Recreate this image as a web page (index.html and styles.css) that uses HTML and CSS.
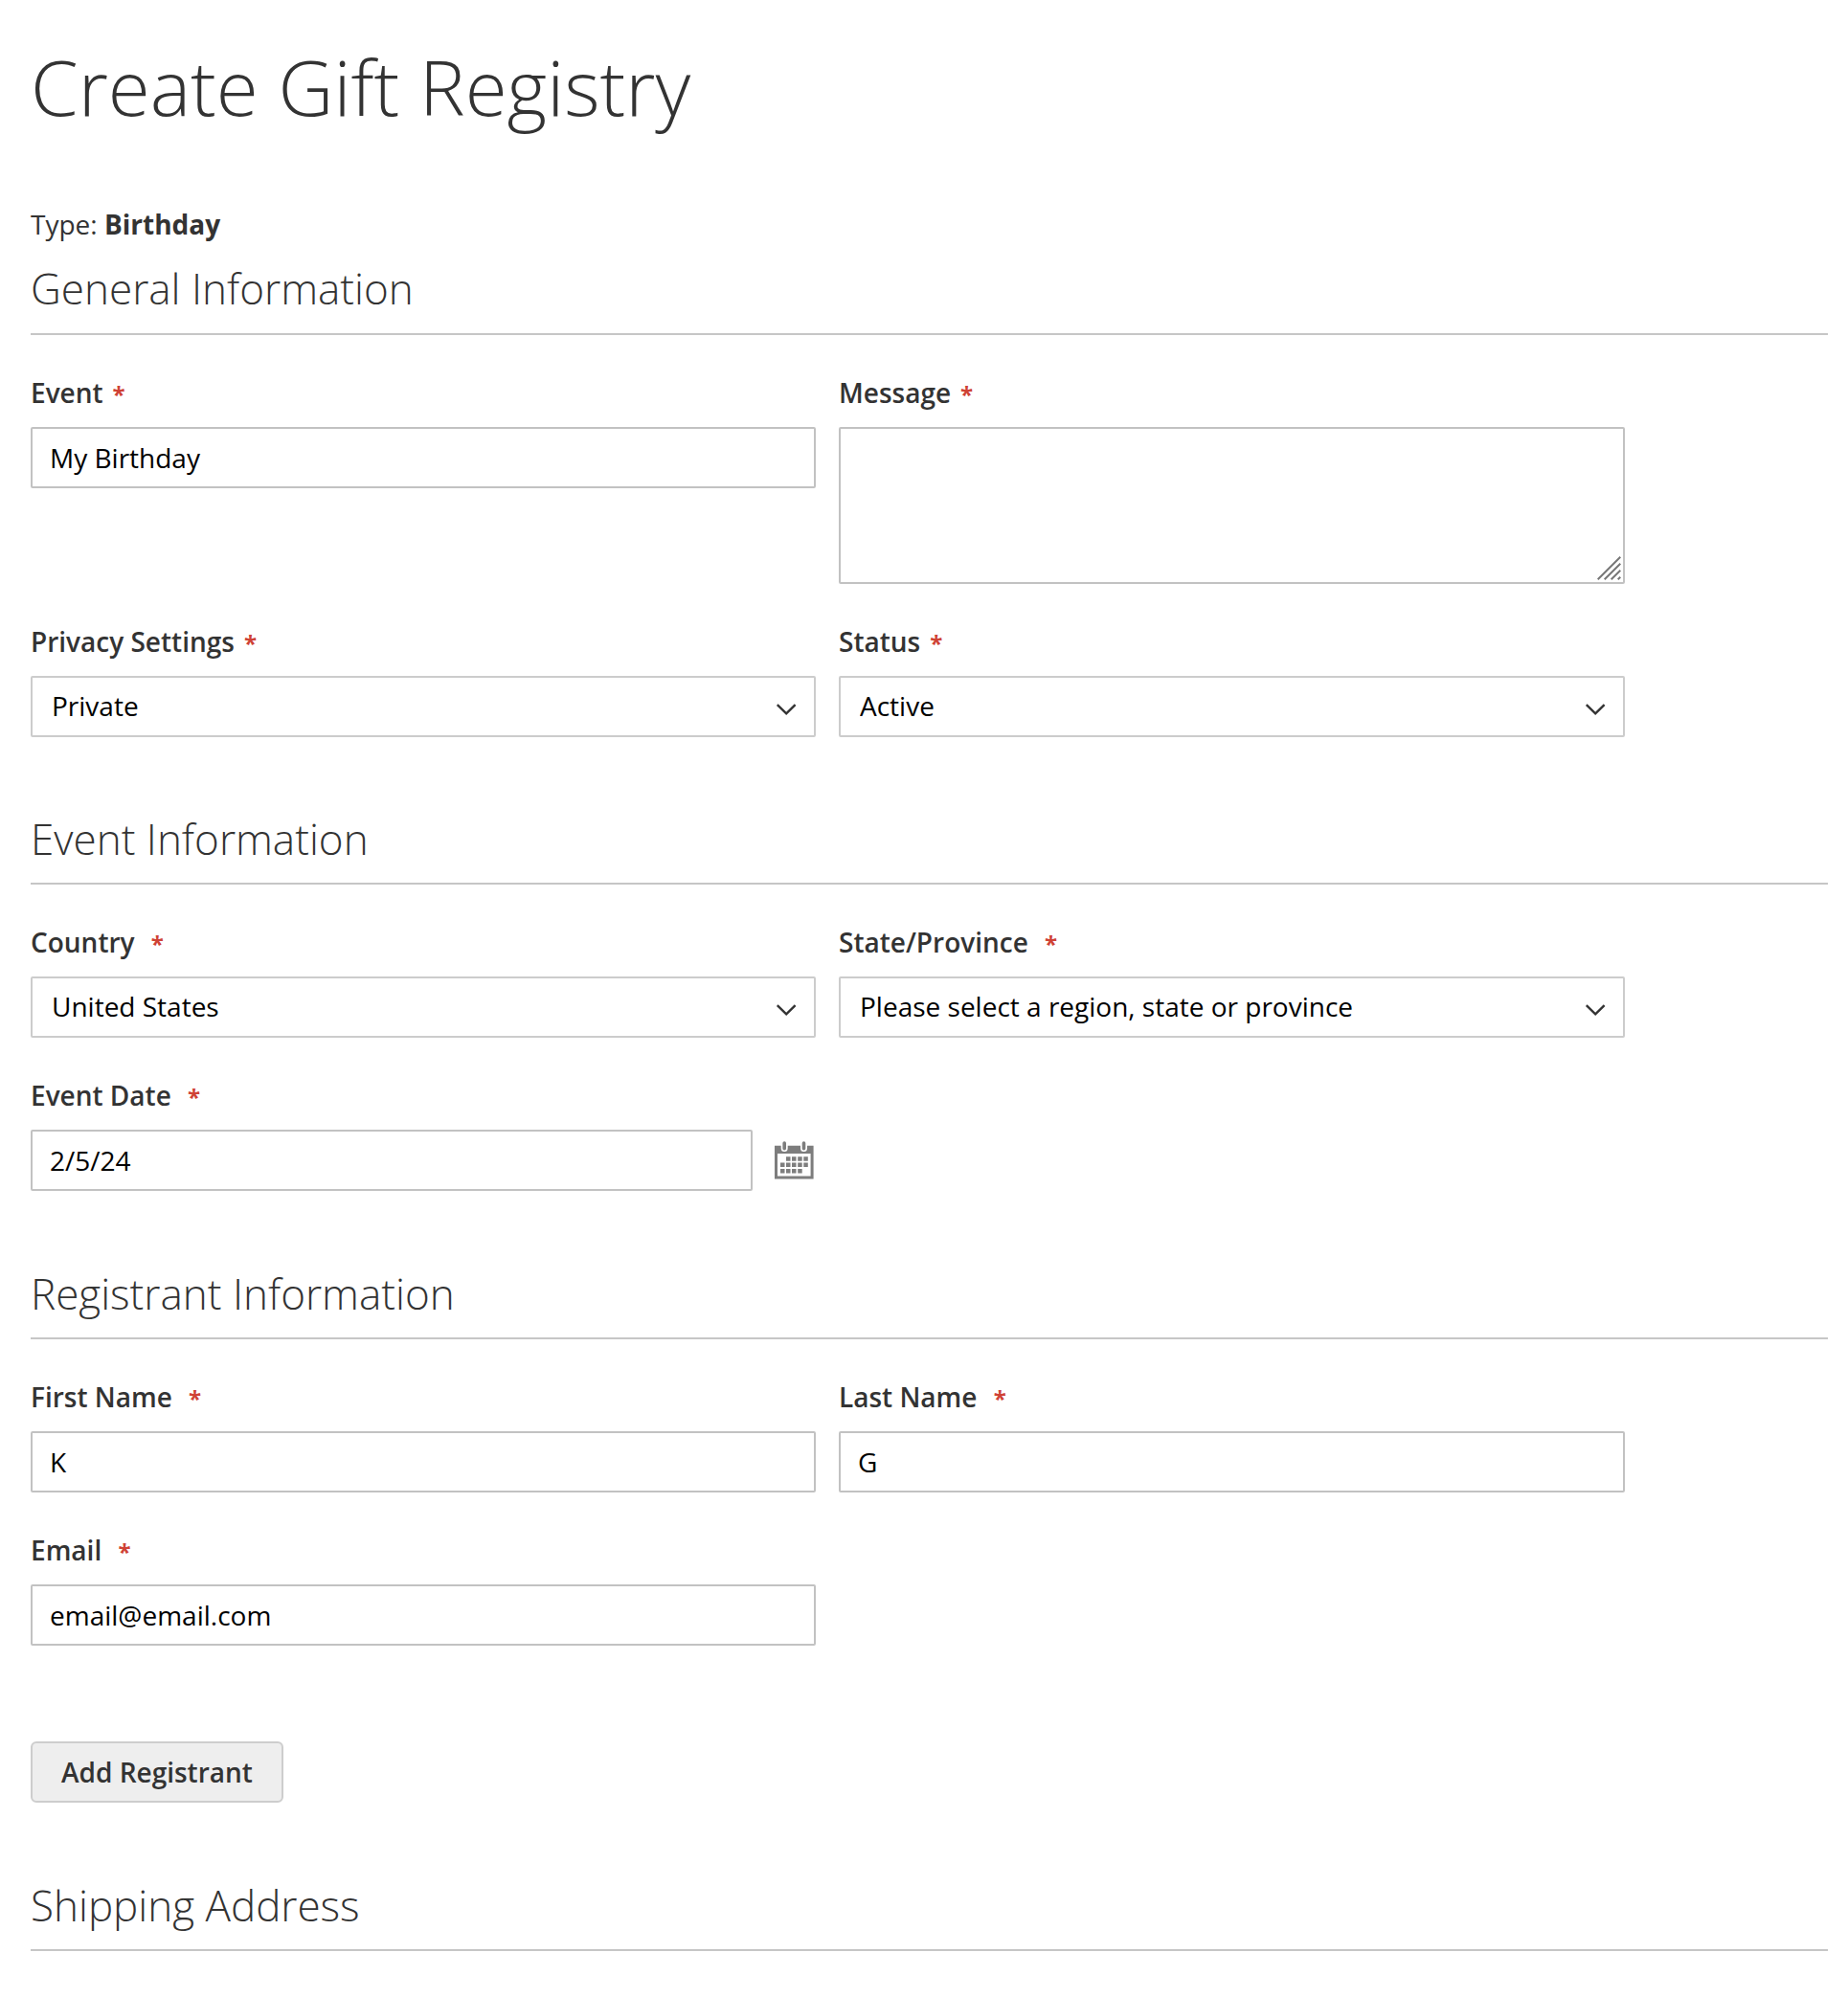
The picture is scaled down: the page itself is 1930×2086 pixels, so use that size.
FILE: index.html
```html
<!DOCTYPE html>
<html lang="en">
<head>
    <meta charset="UTF-8">
    <meta name="viewport" content="width=device-width, initial-scale=1.0">
    <title>Create Gift Registry</title>
    <link rel="stylesheet" href="styles.css">
</head>
<body>
    <main class="page">
        <h1>Create Gift Registry</h1>
        <p class="type">Type: <strong>Birthday</strong></p>
        <form>
            <section class="fieldset general">
                <h2>General Information</h2>
                <div class="fields">
                    <div class="field">
                        <label for="event">Event<span class="required">*</span></label>
                        <input type="text" id="event" value="My Birthday">
                    </div>
                    <div class="field">
                        <label for="message">Message<span class="required">*</span></label>
                        <div class="control">
                            <textarea id="message"></textarea>
                            <svg class="grip" width="25" height="25" viewBox="0 0 25 25">
                                <path d="M.7 24.3 24.3.7M7.7 24.3 24.3 7.7M14.7 24.3l9.6-9.6M21.7 24.3l2.6-2.6"/>
                            </svg>
                        </div>
                    </div>
                    <div class="field">
                        <label for="privacy">Privacy Settings<span class="required">*</span></label>
                        <div class="control">
                            <select id="privacy"><option>Private</option></select>
                            <svg class="arrow" width="22" height="14" viewBox="0 0 22 14"><path d="M1.8 2.2 11.2 11.4 20.6 2.2"/></svg>
                        </div>
                    </div>
                    <div class="field">
                        <label for="status">Status<span class="required">*</span></label>
                        <div class="control">
                            <select id="status"><option>Active</option></select>
                            <svg class="arrow" width="22" height="14" viewBox="0 0 22 14"><path d="M1.8 2.2 11.2 11.4 20.6 2.2"/></svg>
                        </div>
                    </div>
                </div>
            </section>

            <section class="fieldset">
                <h2>Event Information</h2>
                <div class="fields">
                    <div class="field">
                        <label for="country">Country <span class="required">*</span></label>
                        <div class="control">
                            <select id="country"><option>United States</option></select>
                            <svg class="arrow" width="22" height="14" viewBox="0 0 22 14"><path d="M1.8 2.2 11.2 11.4 20.6 2.2"/></svg>
                        </div>
                    </div>
                    <div class="field">
                        <label for="region">State/Province <span class="required">*</span></label>
                        <div class="control">
                            <select id="region"><option>Please select a region, state or province</option></select>
                            <svg class="arrow" width="22" height="14" viewBox="0 0 22 14"><path d="M1.8 2.2 11.2 11.4 20.6 2.2"/></svg>
                        </div>
                    </div>
                    <div class="field">
                        <label for="date">Event Date <span class="required">*</span></label>
                        <div class="date">
                            <input type="text" id="date" value="2/5/24">
                            <svg class="calendar" width="41" height="40" viewBox="0 0 41 40">
                                <path fill="#7d7d7d" fill-rule="evenodd" d="M0 4.7h40.6v34.8H0zM3 13v23.4h34.6V13z"/>
                                <path stroke="#fff" stroke-width="7" stroke-linecap="round" d="M10.2 3v4.6M30.5 3v4.6"/>
                                <path stroke="#7d7d7d" stroke-width="3.6" stroke-linecap="round" d="M10.2 2v5.8M30.5 2v5.8"/>
                                <path fill="#7d7d7d" d="M12 16.3h4.5v4.5H12zM18 16.3h4.5v4.5H18zM24.2 16.3h4.5v4.5h-4.5zM30.3 16.3h4.5v4.5h-4.5zM6 22.6h4.5v4.5H6zM12 22.6h4.5v4.5H12zM18 22.6h4.5v4.5H18zM24.2 22.6h4.5v4.5h-4.5zM30.3 22.6h4.5v4.5h-4.5zM6 28.9h4.5v4.5H6zM12 28.9h4.5v4.5H12zM18 28.9h4.5v4.5H18zM24.2 28.9h4.5v4.5h-4.5z"/>
                            </svg>
                        </div>
                    </div>
                </div>
            </section>

            <section class="fieldset registrant">
                <h2>Registrant Information</h2>
                <div class="fields">
                    <div class="field">
                        <label for="firstname">First Name <span class="required">*</span></label>
                        <input type="text" id="firstname" value="K">
                    </div>
                    <div class="field">
                        <label for="lastname">Last Name <span class="required">*</span></label>
                        <input type="text" id="lastname" value="G">
                    </div>
                    <div class="field">
                        <label for="email">Email <span class="required">*</span></label>
                        <input type="text" id="email" value="email@email.com">
                    </div>
                </div>
                <button type="button">Add Registrant</button>
            </section>

            <section class="fieldset shipping">
                <h2>Shipping Address</h2>
            </section>
        </form>
    </main>
</body>
</html>
```
FILE: styles.css
```css
* {
    box-sizing: border-box;
}
body {
    margin: 0;
    background: #fff;
    color: #333;
    font-family: "Open Sans", "Noto Sans", sans-serif;
    font-size: 28px;
    line-height: 38px;
}
.page {
    padding: 46px 21px 0 32px;
}
h1 {
    margin: 0 0 81px;
    font-size: 80px;
    font-weight: 300;
    line-height: 88px;
}
.type {
    margin: 0;
}
.fieldset {
    padding-top: 76px;
}
.general {
    padding-top: 18px;
}
.registrant,
.shipping {
    padding-top: 77px;
}
h2 {
    margin: 0 0 40px;
    padding-bottom: 16px;
    border-bottom: 2px solid #c6c6c6;
    font-size: 44px;
    font-weight: 300;
    line-height: 60px;
}
.general h2 {
    padding-bottom: 17px;
}
.fields {
    display: grid;
    grid-template-columns: 820px 821px;
    gap: 40px 24px;
}
label {
    display: block;
    margin-bottom: 16px;
    font-weight: 600;
    line-height: 40px;
}
.required {
    margin-left: 10px;
    color: #cf4235;
    font-size: 24px;
    font-weight: 700;
    line-height: 1;
}
input,
select,
textarea {
    display: block;
    width: 100%;
    height: 64px;
    margin: 0;
    border: 2px solid #c2c2c2;
    border-radius: 2px;
    background: #fff;
    color: #000;
    font: inherit;
}
input {
    padding: 0 18px;
}
textarea {
    height: 164px;
    padding: 16px;
    resize: none;
}
select {
    padding: 0 50px 3px 20px;
    border-color: #ccc;
    appearance: none;
}
.control {
    position: relative;
}
.arrow,
.grip {
    position: absolute;
    fill: none;
    stroke-width: 2;
    pointer-events: none;
}
.arrow {
    top: 28px;
    right: 20px;
    stroke: #333;
    stroke-width: 2.4;
}
.grip {
    right: 4px;
    bottom: 4px;
    stroke: #777;
}
.date {
    display: flex;
    align-items: center;
    gap: 23px;
}
.date input {
    width: 754px;
}
.calendar {
    flex: none;
    fill: none;
}
button {
    display: block;
    height: 64px;
    margin-top: 100px;
    padding: 0 30px;
    border: 2px solid #cdcdcd;
    border-radius: 6px;
    background: #eee;
    color: #333;
    font: inherit;
    font-weight: 600;
}
```
